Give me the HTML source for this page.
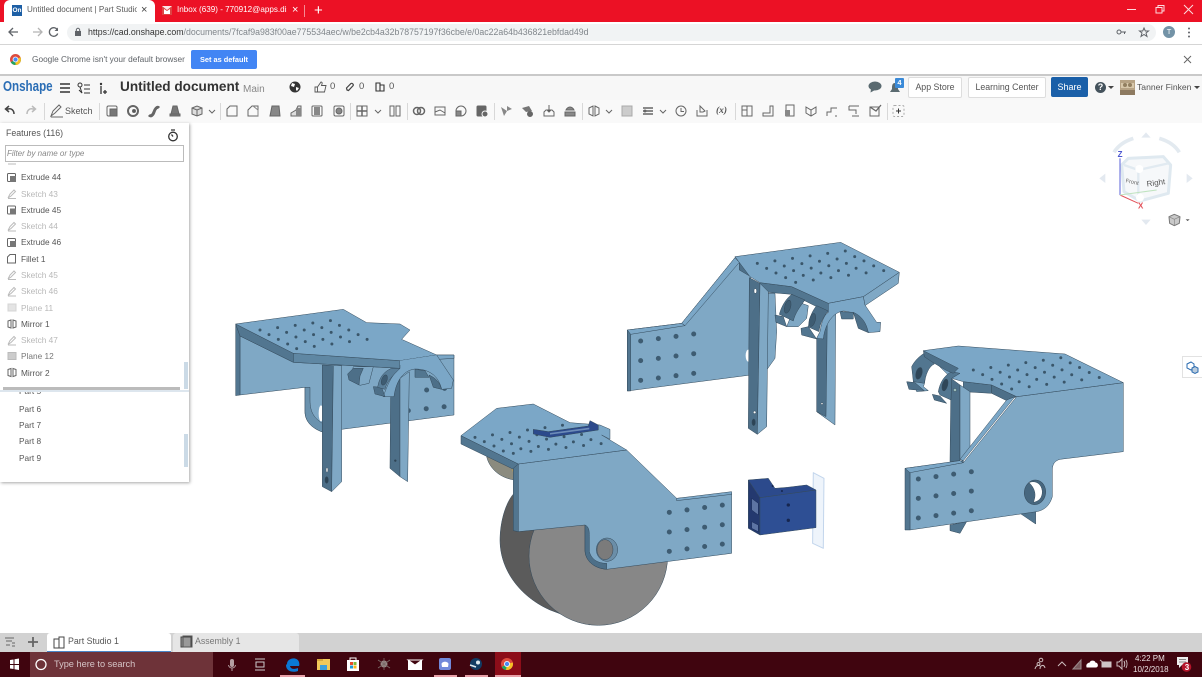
<!DOCTYPE html>
<html><head><meta charset="utf-8"><style>
html,body{margin:0;padding:0;width:1202px;height:677px;overflow:hidden;background:#fff;font-family:"Liberation Sans",sans-serif}
#r{position:absolute;left:0;top:0;width:1202px;height:677px;overflow:hidden;filter:blur(.35px)}
.a,.t{position:absolute}
.t{white-space:nowrap;line-height:12px}
.f{font-size:8.3px;left:21px;color:#555}
.g{color:#b8b8b8}
.p{font-size:8.3px;left:19px;color:#555}
.d{position:absolute;width:1px;height:17px;top:103px;background:#d8d8d8}
.b{position:absolute;background:#fff;border:1px solid #ddd;border-radius:2px;top:77px;height:19px;line-height:19px;text-align:center;font-size:8.8px;color:#555;box-sizing:content-box}
svg{position:absolute;overflow:visible}
</style></head><body><div id="r">

<!-- 3D viewport -->
<svg style="left:0;top:0" width="1202" height="677" viewBox="0 0 1202 677" stroke-linejoin="round">
<!-- Part A -->
<g transform="translate(225 300) scale(.3333)" stroke="#33495a" stroke-width="1.5">
<path d="M45 108L205 187L525 205L635 165L687 165L687 345L350 388L292 396C262 385 240 365 240 335L240 262L45 285Z" fill="#7fa8c5"/>
<path d="M240 262L240 335C240 365 262 385 292 396L292 370C270 355 255 340 255 300L255 262Z" fill="#6a92ae"/>
<ellipse cx="288" cy="340" rx="7" ry="24" fill="#fff" stroke="none"/>
<path d="M32 72L45 108L45 285L32 287Z" fill="#527690"/>
<path d="M32 72L205 160L205 187L45 108Z" fill="#527690"/>
<path d="M205 160L525 182L525 205L205 187Z" fill="#5f87a3"/>
<path d="M32 72L355 28L425 68L525 72L555 90L530 118L635 165L525 182L205 160Z" fill="#7ba7c7"/>
<path d="M635 165L687 165L687 175L640 178Z" fill="#7ba7c7"/>
<g fill="none" stroke="#3a566a" stroke-width="9" stroke-linecap="round" stroke-dasharray="0 53.3"><path d="M105 90L369 55"/><path d="M132 104L396 69"/><path d="M160 118L424 83"/><path d="M188 132L452 97"/><path d="M215 146L479 111"/></g>
<g fill="none" stroke="#3e5c72" stroke-width="15" stroke-linecap="round" stroke-dasharray="0 54"><path d="M605 270L660 265"/><path d="M550 332L660 320"/></g>
<path d="M292 195L325 197L320 575L292 560Z" fill="#4d6f88"/><path d="M325 197L350 197L350 545L320 575Z" fill="#7fa8c5"/>
<ellipse cx="306" cy="510" rx="3" ry="7" fill="#fff"/><ellipse cx="305" cy="540" rx="5" ry="10" fill="#2c4456"/>
<path d="M385 200L445 200L432 250L405 256L375 240Z" fill="#7fa8c5"/>
<path d="M368 222L385 205L415 205L405 228L402 255L372 240Z" fill="#4d6f88"/>
<path d="M497 292L525 235L525 530L495 505Z" fill="#4d6f88"/><path d="M525 235L553 215L548 545L525 530Z" fill="#7fa8c5"/>
<circle cx="511" cy="482" r="3" fill="#2c4456"/>
<path d="M475 290C490 245 505 220 525 205L525 182L635 165L685 240L680 265L650 268C640 225 610 207 570 207C530 212 512 250 507 290Z" fill="#7ba7c7"/>
<path d="M525 182L635 165L630 175L525 195Z" fill="#7ba7c7" stroke="none"/>
<path d="M570 208L600 212L612 232L570 232Z" fill="#527690"/>
<path d="M612 225C635 235 645 250 650 268L625 262Z" fill="#4d6f88"/>
<path d="M445 260L470 262L480 290L450 282Z" fill="#4d6f88"/>
<path d="M458 262C462 235 475 215 500 205L525 205C505 225 485 245 480 268Z" fill="#5a7f9a"/>
<ellipse cx="478" cy="240" rx="8" ry="16" fill="#3e5c72" transform="rotate(20 478 240)"/>
</g>
<!-- Part B -->
<g transform="translate(620 235) scale(.3333)" stroke="#33495a" stroke-width="1.5">
<path d="M22 285L185 265L345 68L392 125L392 420L22 468Z" fill="#7fa8c5"/>
<path d="M22 285L32 298L32 468L22 468Z" fill="#527690"/>
<path d="M22 285L185 265L195 272L32 298Z" fill="#7ba7c7"/>
<path d="M185 265L345 68L358 82L195 272Z" fill="#7ba7c7"/>
<ellipse cx="385" cy="362" rx="8" ry="18" fill="#fff" stroke="none"/>
<g fill="none" stroke="#3e5c72" stroke-width="15" stroke-linecap="round" stroke-dasharray="0 53.5"><path d="M62 318L222 297"/><path d="M62 377L222 356"/><path d="M62 436L222 415"/></g>
<path d="M420 175L465 175L470 290L465 370L440 405L420 400Z" fill="#7fa8c5"/>
<path d="M345 65L358 82L358 105L392 125L415 100Z" fill="#4d6f88"/>
<path d="M420 143L515 155L625 205L625 232L515 178L420 170Z" fill="#527690"/>
<path d="M730 185L838 112L835 145L735 212Z" fill="#7fa8c5"/>
<path d="M345 65L662 22L838 112L730 185L625 205L515 155L420 143L390 125Z" fill="#7ba7c7"/>
<g fill="none" stroke="#3a566a" stroke-width="9" stroke-linecap="round" stroke-dasharray="0 53.3"><path d="M412 85L682 47"/><path d="M440 100L710 64"/><path d="M468 114L738 77"/><path d="M497 128L767 92"/><path d="M527 142L797 106"/></g>
<path d="M388 128L420 145L412 598L385 580Z" fill="#4d6f88"/><path d="M420 145L445 170L440 575L412 598Z" fill="#7fa8c5"/>
<ellipse cx="406" cy="168" rx="4" ry="7" fill="#fff"/><circle cx="404" cy="532" r="4" fill="#fff"/><ellipse cx="401" cy="562" rx="5" ry="10" fill="#2c4456"/>
<path d="M590 310L628 240L618 550L590 530Z" fill="#4d6f88"/><path d="M622 245L647 232L645 570L590 530L618 545Z" fill="#7fa8c5"/><circle cx="606" cy="506" r="3" fill="#fff"/>
<path d="M530 200L565 212L560 250L535 275L500 275Z" fill="#7fa8c5"/>
<path d="M515 178L555 195C540 215 525 235 520 258L478 238C485 212 498 192 515 178Z" fill="#4d6f88"/>
<ellipse cx="503" cy="215" rx="9" ry="20" fill="#3e5c72" transform="rotate(15 503 215)"/>
<path d="M465 240L490 245L500 275L468 262Z" fill="#527690"/>
<path d="M590 310L600 290C605 260 612 240 625 232L625 205L730 185L735 210L770 262L782 262L780 290L745 293C735 255 705 230 670 228C640 232 615 265 610 312Z" fill="#7ba7c7"/>
<path d="M660 230L700 232L700 252L665 252Z" fill="#527690"/>
<path d="M700 232C725 242 740 265 745 293L715 280Z" fill="#4d6f88"/>
<path d="M590 212L625 228C610 245 600 265 597 290L565 276C568 250 575 230 590 212Z" fill="#4d6f88"/>
<ellipse cx="577" cy="255" rx="9" ry="20" fill="#3e5c72" transform="rotate(15 577 255)"/>
<path d="M543 280L565 275L590 312L545 300Z" fill="#527690"/>
</g>
<!-- Part C -->
<g transform="translate(895 340) scale(.3333)" stroke="#33495a" stroke-width="1.5">
<path d="M165 555L215 545L195 580L165 572Z" fill="#527690"/>
<path d="M378 522L422 510L422 552Z" fill="#527690"/>
<path d="M205 125L290 135L290 160L205 155Z" fill="#527690"/>
<path d="M290 135L365 170L335 182L290 160Z" fill="#4d6f88"/>
<path d="M168 115L195 135L195 362L165 365Z" fill="#4d6f88"/>
<path d="M195 135L225 155L225 330L195 360Z" fill="#7fa8c5"/>
<path d="M335 180L360 170L205 362L195 358Z" fill="#7ba7c7"/>
<path d="M365 170L685 128L685 335L495 358C480 362 472 372 472 390L472 470C465 495 450 510 425 515L45 570L45 395L205 368Z" fill="#7fa8c5"/>
<path d="M30 385L205 362L205 368L45 395L45 570L30 570Z" fill="#527690"/>
<path d="M30 385L195 362L205 368L45 398Z" fill="#7ba7c7"/>
<path d="M85 32L190 18L510 42L685 128L365 170L290 135L205 125L170 115Z" fill="#7ba7c7"/>
<g fill="none" stroke="#3a566a" stroke-width="9" stroke-linecap="round" stroke-dasharray="0 53"><path d="M235 90L500 53"/><path d="M263 104L530 68"/><path d="M291 118L558 82"/><path d="M320 132L587 97"/><path d="M350 147L618 112"/></g>
<g fill="none" stroke="#3e5c72" stroke-width="15" stroke-linecap="round" stroke-dasharray="0 53.5"><path d="M70 417L231 395"/><path d="M70 475L231 453"/><path d="M70 534L231 512"/></g>
<ellipse cx="420" cy="457" rx="32" ry="37" fill="#47677f" transform="rotate(8 420 457)"/>
<path d="M402 428C420 420 440 430 442 455C442 475 430 485 415 487C425 465 420 445 402 428Z" fill="#fff"/>
<circle cx="180" cy="150" r="5" fill="#9bb"/>
<path d="M88 92C90 110 92 125 85 140L100 152L65 155L55 125Z" fill="#7fa8c5"/>
<path d="M50 80C60 60 75 48 90 38L118 72C100 80 92 105 88 130L55 125Z" fill="#527690"/>
<ellipse cx="72" cy="100" rx="9" ry="18" fill="#2f4658" transform="rotate(15 72 100)"/>
<path d="M35 125L60 128L88 152L42 148Z" fill="#4d6f88"/>
<path d="M112 163L135 168L155 190L118 180Z" fill="#4d6f88"/>
<path d="M130 155C135 125 150 105 170 95L195 100L170 115L168 180L135 165Z" fill="#527690"/>
<ellipse cx="150" cy="135" rx="8" ry="18" fill="#2f4658" transform="rotate(15 150 135)"/>
<path d="M85 32L190 85L175 100L155 92L110 65L88 50Z" fill="#4d6f88"/>
</g>
<!-- Part D + wheel -->
<g transform="translate(450 400) scale(.3333)" stroke="#33495a" stroke-width="1.5">
<path d="M110 170C118 205 150 235 195 240L205 190Z" fill="#8b8b7f"/>
<path d="M186 205L195 212L192 228Z" fill="#caa040" stroke="none"/>
<path d="M192 280C165 310 150 370 150 420C150 510 210 590 300 630L420 675L420 300Z" fill="#5b5b5b"/>
<circle cx="445" cy="468" r="208" fill="#878787"/>
<path d="M33 107L205 192L205 215L33 132Z" fill="#527690"/>
<path d="M190 205L205 192L205 395L190 392Z" fill="#527690"/>
<path d="M205 192L530 150L680 295L845 280L845 460L470 508C430 505 405 480 405 450L405 375L205 395Z" fill="#7fa8c5"/>
<path d="M405 375C418 380 418 395 418 410L418 455C425 480 445 490 470 490L470 508C430 505 405 480 405 450Z" fill="#4d6f88"/>
<path d="M33 107L140 25L250 12L360 68L450 75L480 88L480 118L455 105L530 150L205 192Z" fill="#7ba7c7"/>
<path d="M680 295L845 275L845 283L680 302Z" fill="#7ba7c7"/>
<g fill="none" stroke="#3a566a" stroke-width="9" stroke-linecap="round" stroke-dasharray="0 53"><path d="M75 112L342 75"/><path d="M103 125L370 90"/><path d="M132 138L399 103"/><path d="M160 153L430 118"/><path d="M190 160L460 130"/></g>
<g fill="none" stroke="#3e5c72" stroke-width="15" stroke-linecap="round" stroke-dasharray="0 53.5"><path d="M658 337L820 315"/><path d="M658 396L820 374"/><path d="M658 454L820 432"/></g>
<ellipse cx="471" cy="449" rx="32" ry="35" fill="#6b8ea8"/><ellipse cx="465" cy="449" rx="24" ry="30" fill="#7b7b7b"/>
<path d="M250 88L295 95L415 78L420 62L445 75L445 90L300 112L250 102Z" fill="#2c4a8c"/>
<path d="M300 99L418 83L418 88L300 104Z" fill="#6d8cb8" stroke="none"/>
<!-- blue block -->
<path d="M1090 218L1122 235L1120 445L1088 430Z" fill="#eef4fb" stroke="#c2d5ec" stroke-width="3"/>
<path d="M895 240L930 293L930 405L895 385Z" fill="#24396f"/>
<path d="M905 295L925 310L925 345L905 330ZM905 365L925 375L925 395L905 385Z" fill="#5d74a3" stroke="#182a55"/>
<path d="M930 293L1098 270L1098 383L930 405Z" fill="#2e4f94"/>
<path d="M895 240L955 235L975 265L1012 262L1070 255L1098 270L930 293Z" fill="#2c4a8c"/>
<circle cx="1015" cy="315" r="5" fill="#16264f" stroke="none"/><circle cx="1015" cy="361" r="5" fill="#16264f" stroke="none"/>
<circle cx="968" cy="258" r="3" fill="#16264f" stroke="none"/><circle cx="996" cy="273" r="3" fill="#16264f" stroke="none"/>
</g>
<!-- nav cube -->
<g transform="translate(1000 125) scale(.3333)">
<path d="M342 82C355 60 375 48 400 40M478 40C505 48 525 60 538 82" fill="none" stroke="#e3eaf0" stroke-width="11"/>
<path d="M438 22L452 38L424 38ZM298 160L316 146L316 174ZM578 160L560 146L560 174ZM438 300L424 284L452 284Z" fill="#e3e9f0"/>
<path d="M385 100L490 95L512 120L505 205L420 228L372 200L365 120Z" fill="#f6f8fa" stroke="#dfe9f0" stroke-width="9"/>
<path d="M372 120L415 135L415 215M415 135L505 115" fill="none" stroke="#e1eaf1" stroke-width="7"/>
<circle cx="418" cy="132" r="12" fill="#fff"/><circle cx="420" cy="218" r="12" fill="#fff"/>
<path d="M360 100V210" stroke="#5b63d8" stroke-width="3" fill="none"/>
<path d="M360 210L415 235" stroke="#e2525a" stroke-width="3" fill="none"/>
<path d="M360 210L470 195" stroke="#bfe3bf" stroke-width="3" fill="none"/>
<text x="353" y="96" font-family="Liberation Sans" font-size="24" font-weight="bold" fill="#4a55d0">Z</text>
<text x="414" y="250" font-family="Liberation Sans" font-size="24" font-weight="bold" fill="#e2525a">X</text>
<text x="441" y="185" font-family="Liberation Sans" font-size="24" fill="#555" transform="rotate(-8 441 185)">Right</text>
<text x="376" y="172" font-family="Liberation Sans" font-size="17" fill="#666" transform="rotate(12 376 172)">Front</text>
<path d="M507 275L523 268L540 275L538 295L523 302L509 295Z" fill="#c9c9c9" stroke="#777" stroke-width="3"/>
<path d="M507 275L523 283L540 275M523 283V302" fill="none" stroke="#888" stroke-width="2"/>
<path d="M557 283H569L563 288Z" fill="#444"/>
</g>
</svg>

<!-- side button -->
<div class="a" style="left:1182px;top:356px;width:20px;height:22px;background:#fff;border:1px solid #e2e2e2;border-right:0;box-sizing:border-box"></div>
<svg style="left:1186px;top:361px" width="13" height="13" viewBox="0 0 13 13" fill="none" stroke="#2a6bb0" stroke-width="1"><path d="M1 3L5 1L8 3V7L5 9L1 7Z"/><path d="M6 7L9 5.5L12 7V11L9 12.5L6 11Z" fill="#bcd"/></svg>

<!-- chrome titlebar -->
<div class="a" style="left:0;top:0;width:1202px;height:22px;background:#ec1125"></div>
<div class="a" style="left:4px;top:0;width:151px;height:22px;background:#fff;border-radius:6px 6px 0 0"></div>
<div class="a" style="left:12px;top:5px;width:10px;height:11px;background:#1d5fa5;color:#fff;font-size:6.5px;font-weight:bold;line-height:11px;text-align:center">On</div>
<div class="t" style="left:27px;top:4px;font-size:8.1px;color:#5a5a5a;width:110px;overflow:hidden">Untitled document | Part Studio 1</div>
<div class="t" style="left:141px;top:4px;font-size:11px;color:#444">×</div>
<svg style="left:162px;top:6px" width="10" height="9" viewBox="0 0 10 9"><rect width="10" height="9" fill="#fff" opacity=".9"/><path d="M0 0L5 4L10 0V9H0Z" fill="#d44"/><path d="M2 8V3L5 5L8 3V8Z" fill="#fff"/></svg>
<div class="t" style="left:177px;top:4px;font-size:8.1px;color:#fff;width:110px;overflow:hidden">Inbox (639) - 770912@apps.distr</div>
<div class="t" style="left:292px;top:4px;font-size:11px;color:#fff">×</div>
<div class="a" style="left:304px;top:5px;width:1px;height:12px;background:#f58a93"></div>
<div class="t" style="left:314px;top:5px;font-size:15px;color:#fff">+</div>
<svg style="left:1125px;top:3px" width="72" height="13" viewBox="0 0 72 13" fill="none" stroke="#fff" stroke-width="1" opacity=".85"><path d="M2 6.5H11"/><path d="M31 4.5H37V10H31ZM33 4.5V2.5H39V8H37"/><path d="M59 2L68 11M68 2L59 11"/></svg>

<!-- address bar -->
<div class="a" style="left:0;top:22px;width:1202px;height:22px;background:#fff;border-bottom:1px solid #d5d5d5"></div>
<div class="a" style="left:67px;top:24px;width:1089px;height:17px;background:#f1f3f4;border-radius:9px"></div>
<svg style="left:6px;top:25px" width="54" height="14" viewBox="0 0 54 14" fill="none" stroke="#5f6368" stroke-width="1.3"><path d="M12 7H3M7 3L3 7L7 11"/><path d="M27 7H36M32 3L36 7L32 11" stroke="#b4b4b4"/><path d="M51.5 5A4.3 4.3 0 1 0 51.7 8.5"/><path d="M52 2.5V6H48.5Z" fill="#5f6368" stroke="none"/></svg>
<svg style="left:74px;top:27px" width="8" height="10" viewBox="0 0 8 10"><rect x="1" y="4" width="6" height="5" fill="#5f6368"/><path d="M2.3 4V3A1.7 1.7 0 0 1 5.7 3V4" fill="none" stroke="#5f6368"/></svg>
<div class="t" style="left:88px;top:26px;font-size:8.77px;color:#80868b"><span style="color:#333">https://cad.onshape.com</span>/documents/7fcaf9a983f00ae775534aec/w/be2cb4a32b78757197f36cbe/e/0ac22a64b436821ebfdad49d</div>
<svg style="left:1116px;top:27px" width="34" height="11" viewBox="0 0 34 11" fill="none" stroke="#5f6368"><circle cx="3" cy="5" r="2"/><path d="M5 5H10M8.5 5V7"/><path d="M28 1L29.3 4H32.5L30 6L31 9.5L28 7.5L25 9.5L26 6L23.5 4H26.7Z"/></svg>
<div class="a" style="left:1163px;top:26px;width:12px;height:12px;border-radius:50%;background:#7393a7;color:#fff;font-size:7.5px;line-height:12px;text-align:center">T</div>
<svg style="left:1187px;top:27px" width="4" height="11" viewBox="0 0 4 11" fill="#5f6368"><circle cx="2" cy="1.5" r="1"/><circle cx="2" cy="5.5" r="1"/><circle cx="2" cy="9.5" r="1"/></svg>

<!-- infobar -->
<div class="a" style="left:0;top:45px;width:1202px;height:29px;background:#fff;border-bottom:2px solid #c9c9c9"></div>
<svg style="left:10px;top:54px" width="11" height="11" viewBox="0 0 22 22"><circle cx="11" cy="11" r="11" fill="#dd4b3e"/><path d="M11 11L1.5 16.5A11 11 0 0 0 11 22A11 11 0 0 0 21.5 8Z" fill="#1da462"/><path d="M11 11L21 6.5A11 11 0 0 1 11 22Z" fill="#f6c026"/><circle cx="11" cy="11" r="5" fill="#4a8af4" stroke="#fff" stroke-width="1.5"/></svg>
<div class="t" style="left:32px;top:53px;font-size:8.3px;color:#5f6368">Google Chrome isn't your default browser</div>
<div class="a" style="left:191px;top:50px;width:66px;height:19px;background:#4285f4;border-radius:2px;color:#fff;font-size:7.4px;font-weight:bold;line-height:19px;text-align:center">Set as default</div>
<svg style="left:1184px;top:56px" width="7" height="7" viewBox="0 0 7 7" stroke="#666" stroke-width="1"><path d="M0 0L7 7M7 0L0 7"/></svg>

<!-- onshape header -->
<div class="a" style="left:0;top:76px;width:1202px;height:24px;background:#f7f7f7"></div>
<div class="a" style="left:0;top:100px;width:1202px;height:23px;background:#f9f9f9"></div>
<div class="t" style="left:3px;top:81px;font-size:14.5px;font-weight:bold;color:#2a6db5;transform:scaleX(.8);transform-origin:0 0">Onshape</div>
<svg style="left:59px;top:82px" width="50" height="13" viewBox="0 0 50 13" fill="none" stroke="#333" stroke-width="1.4"><path d="M1 2H11M1 6H11M1 10H11" stroke-width="1.6"/><circle cx="21" cy="3" r="2" stroke-width="1"/><path d="M21 5L23 11L20 8" stroke-width="1"/><path d="M25 3H31M25 7H31M25 11H31" stroke-width="1"/><circle cx="42" cy="2" r="1.2" fill="#333" stroke="none"/><path d="M42 4V12M46 8V12M44 10H48" stroke-width="1.3"/></svg>
<div class="t" style="left:120px;top:81px;font-size:13.6px;font-weight:bold;color:#333">Untitled document</div>
<div class="t" style="left:243px;top:84px;font-size:10px;color:#888">Main</div>
<svg style="left:289px;top:81px" width="12" height="12" viewBox="0 0 12 12"><circle cx="6" cy="6" r="5.5" fill="#333"/><path d="M3 2L6 3L5 6L2 5ZM7 6L10 7L8 10L7 9Z" fill="#fff"/></svg>
<svg style="left:314px;top:81px" width="13" height="12" viewBox="0 0 13 12" fill="none" stroke="#555" stroke-width=".9"><path d="M1 6H3.5V11H1ZM3.5 6L7 1C8 1 8.5 2 8 3L7.5 4.5H12L10.5 11H3.5"/></svg>
<div class="t" style="left:330px;top:81px;font-size:9.5px;color:#555">0</div>
<svg style="left:345px;top:82px" width="10" height="10" viewBox="0 0 10 10" fill="none" stroke="#444" stroke-width="1.2"><path d="M2 8L1.5 6L6 1.5C7 .8 8.8 2.5 8.2 3.5L3.5 8.5Z"/></svg>
<div class="t" style="left:359px;top:81px;font-size:9.5px;color:#555">0</div>
<svg style="left:375px;top:82px" width="10" height="10" viewBox="0 0 10 10" fill="none" stroke="#333" stroke-width="1.1"><path d="M1 1H5V9H1ZM5 3H9V9H5Z"/></svg>
<div class="t" style="left:389px;top:81px;font-size:9.5px;color:#555">0</div>
<svg style="left:868px;top:81px" width="14" height="12" viewBox="0 0 14 12"><ellipse cx="7" cy="5" rx="6.5" ry="4.5" fill="#5a6a70"/><path d="M3 8L2.5 11.5L7 9Z" fill="#5a6a70"/></svg>
<svg style="left:889px;top:82px" width="12" height="12" viewBox="0 0 12 12"><path d="M6 1C9 1 9 4 9 7L11 10H1L3 7C3 4 3 1 6 1Z" fill="#5a6a70"/></svg>
<div class="a" style="left:895px;top:78px;width:9px;height:10px;background:#3a8ad8;color:#fff;font-size:7.5px;font-weight:bold;line-height:10px;text-align:center;border-radius:1px">4</div>
<div class="b" style="left:908px;width:52px">App Store</div>
<div class="b" style="left:968px;width:76px">Learning Center</div>
<div class="a" style="left:1051px;top:77px;width:37px;height:20px;background:#1a5fa8;border-radius:2px;color:#fff;font-size:9px;line-height:20px;text-align:center">Share</div>
<div class="a" style="left:1095px;top:82px;width:11px;height:11px;border-radius:50%;background:#44525c;color:#fff;font-size:9px;font-weight:bold;line-height:11px;text-align:center">?</div>
<svg style="left:1108px;top:86px" width="6" height="4"><path d="M0 0H6L3 3Z" fill="#444"/></svg>
<svg style="left:1120px;top:80px" width="15" height="15" viewBox="0 0 15 15"><rect width="15" height="15" fill="#b6a284"/><rect x="1" y="3" width="13" height="5" fill="#d7c7aa"/><circle cx="5" cy="5" r="2" fill="#927f60"/><circle cx="10" cy="5" r="2" fill="#927f60"/><rect y="10" width="15" height="5" fill="#8d7a60"/></svg>
<div class="t" style="left:1137px;top:81px;font-size:8.6px;color:#555">Tanner Finken</div>
<svg style="left:1194px;top:86px" width="6" height="4"><path d="M0 0H6L3 3Z" fill="#444"/></svg>

<!-- toolbar -->
<div class="d" style="left:44px"></div><div class="d" style="left:99px"></div><div class="d" style="left:220px"></div><div class="d" style="left:350px"></div><div class="d" style="left:407px"></div><div class="d" style="left:494px"></div><div class="d" style="left:582px"></div><div class="d" style="left:735px"></div><div class="d" style="left:887px"></div>
<div class="t" style="left:65px;top:105px;font-size:9px;color:#555">Sketch</div>
<div class="t" style="left:716px;top:105px;font-size:9.5px;font-weight:bold;font-style:italic;color:#555;font-family:'Liberation Serif',serif">(x)</div>
<svg style="left:0;top:100px" width="910" height="23" viewBox="0 100 910 23" fill="none" stroke="#666" stroke-width="1">
<path d="M14 114C14 110 11 108 8 109L6 109M9 106L5.500 109L9 112" stroke="#444" stroke-width="1.5"/>
<path d="M27 114C27 110 30 108 33 109L35 109M32 106L35.500 109L32 112" stroke="#bbb" stroke-width="1.500"/>
<path d="M51 116L53 111L59 105L61 107L55 113ZM51 117H63" stroke-width="1"/>
<rect x="107" y="106" width="10" height="10" rx="1.500"/><rect x="110" y="109" width="7" height="7" fill="#777"/>
<circle cx="133" cy="111" r="5" stroke-width="2"/><circle cx="134" cy="111" r="1.500" fill="#555"/>
<path d="M149 115C151 117 153 115 154 112C155 109 157 106 159 108" stroke-width="3" stroke="#666"/>
<path d="M173 106H177L179 114H171Z" fill="#777"/><rect x="170" y="114" width="10" height="2" fill="#777"/>
<path d="M192 108L197 106L202 108V114L197 116L192 114Z" fill="#ddd"/><path d="M192 108L197 110L202 108M197 110V116"/>
<path d="M209 110L212 113L215 110" stroke-width="1"/>
<path d="M227 116V109L230 106H237V116Z"/>
<path d="M248 116V110L252 106H258V116Z" stroke-width="1"/><path d="M253 106L258 110V116" stroke="#888"/>
<path d="M270 116L272 106H279L280 116Z" fill="#888"/>
<path d="M291 116V113L296 110L298 106H301V116Z" fill="#ddd"/><rect x="296" y="108" width="5" height="8" fill="#888" stroke="none"/>
<rect x="312" y="106" width="10" height="10" rx="1"/><rect x="314" y="107" width="6" height="8" fill="#888" stroke="none"/>
<rect x="334" y="106" width="10" height="10" rx="1.500"/><circle cx="339" cy="111" r="3" fill="#888"/>
<rect x="357" y="106" width="10" height="10"/><path d="M362 106V116M357 111H367" stroke-width="1.500"/>
<path d="M375 110L378 113L381 110"/>
<path d="M390 106H394V116H390ZM396 106H400V116H396Z"/>
<circle cx="417" cy="111" r="3.500" stroke-width="1.500"/><circle cx="421" cy="111" r="3.500" stroke-width="1.500"/>
<path d="M435 107H445V115H435ZM435 112L440 110L445 113"/>
<circle cx="461" cy="111" r="5"/><path d="M456 111H461V116H456Z" fill="#888"/>
<rect x="477" y="106" width="9" height="10" rx="1" fill="#666"/><circle cx="485" cy="114" r="3" fill="#666" stroke="#f9f9f9"/>
<path d="M501 107L507 111L504 116ZM507 106L512 109L507 111Z" fill="#888" stroke="none"/>
<path d="M522 108L529 106L532 111L526 112Z" fill="#777" stroke="none"/><circle cx="530" cy="114" r="2.500" fill="#666"/>
<path d="M544 112V116H554V112L552 110H546ZM549 105V110" stroke-width="1"/><path d="M547 110L549 112L551 110" fill="#555"/>
<path d="M565 112V116H575V112ZM566 110C568 106 572 106 574 110Z" fill="#888"/>
<path d="M589 108L593 106V116L589 114ZM595 106L599 108V114L595 116Z"/>
<path d="M606 110L609 113L612 110"/>
<rect x="622" y="106" width="10" height="10" fill="#ccc" stroke="#aaa"/>
<path d="M643 108H653M643 111H653M643 114H653" stroke-width="1.500"/><circle cx="645" cy="111" r="1"/>
<path d="M660 110L663 113L666 110"/>
<circle cx="681" cy="111" r="5"/><path d="M681 108V111.500H684"/>
<path d="M697 110V116H707V110M700 106L705 111L703 112H700Z"/>
<path d="M742 106H752V116H742ZM747 106V116M742 110H747"/>
<path d="M763 116V113H770V106H773V116Z"/>
<rect x="786" y="105" width="8" height="11"/><rect x="785" y="110" width="5" height="6" fill="#888" stroke="none"/>
<path d="M806 107L811 110L816 107V113L811 116L806 113ZM811 110V116"/>
<path d="M827 116V112H831V108H837M835 116H837"/>
<path d="M849 106H859M849 106V110H856V114M852 116H859"/>
<rect x="870" y="107" width="9" height="9"/><path d="M870 107L876 111L881 105" stroke-width="1.300"/>
<rect x="893" y="105.500" width="11" height="11" rx="1.500" stroke="#aaa" stroke-dasharray="2 2"/><path d="M896 111H901M898.500 108.500V113.500" stroke="#333"/>
</svg>

<!-- left panel -->
<div class="a" style="left:0;top:123px;width:189px;height:359px;background:#fff;box-shadow:1px 1px 3px rgba(0,0,0,.35)"></div>
<div class="t" style="left:6px;top:127px;font-size:8.8px;color:#555">Features (116)</div>
<svg style="left:167px;top:129px" width="12" height="13" viewBox="0 0 12 13" fill="none" stroke="#333" stroke-width="1.300"><circle cx="6" cy="7.500" r="4.300"/><path d="M4 1H8M6 7.500L4.500 5.500"/></svg>
<div class="a" style="left:5px;top:145px;width:179px;height:17px;border:1px solid #bbb;box-sizing:border-box"></div>
<div class="t" style="left:7px;top:148px;font-size:8px;font-style:italic;color:#888">Filter by name or type</div>
<div class="a" style="left:8px;top:163px;width:8px;height:2px;background:#ddd"></div>

<div class="t f" style="top:171px">Extrude 44</div>
<div class="t f g" style="top:188px">Sketch 43</div>
<div class="t f" style="top:204px">Extrude 45</div>
<div class="t f g" style="top:220px">Sketch 44</div>
<div class="t f" style="top:236px">Extrude 46</div>
<div class="t f" style="top:253px">Fillet 1</div>
<div class="t f g" style="top:269px">Sketch 45</div>
<div class="t f g" style="top:285px">Sketch 46</div>
<div class="t f g" style="top:302px">Plane 11</div>
<div class="t f" style="top:318px">Mirror 1</div>
<div class="t f g" style="top:334px">Sketch 47</div>
<div class="t f" style="top:350px;color:#777">Plane 12</div>
<div class="t f" style="top:367px">Mirror 2</div>
<svg style="left:0;top:170px" width="20" height="212" viewBox="0 170 20 212" fill="none" stroke="#666" stroke-width="1">
<rect x="7.500" y="173.500" width="8" height="8" rx="1"/><rect x="10" y="176" width="6" height="6" fill="#777" stroke="none"/>
<rect x="7.500" y="206" width="8" height="8" rx="1"/><rect x="10" y="208.500" width="6" height="6" fill="#777" stroke="none"/>
<rect x="7.500" y="238.500" width="8" height="8" rx="1"/><rect x="10" y="241" width="6" height="6" fill="#777" stroke="none"/>
<g stroke="#bbb"><path d="M8 198L10 194L14 190L15.500 191.500L11 196L8 198M8 198.500H16"/><path d="M8 230.500L10 226.500L14 222.500L15.500 224L11 228.500L8 230.500M8 231H16"/><path d="M8 279L10 275L14 271L15.500 272.500L11 277L8 279M8 279.500H16"/><path d="M8 295.500L10 291.500L14 287.500L15.500 289L11 293.500L8 295.500M8 296H16"/><path d="M8 344.500L10 340.500L14 336.500L15.500 338L11 342.500L8 344.500M8 345H16"/></g>
<path d="M7.500 263V257L10 254.500H15.500V263Z"/>
<rect x="8" y="304" width="8" height="7" fill="#e4e4e4" stroke="#d5d5d5"/>
<rect x="8" y="352.500" width="8" height="7" fill="#ccc" stroke="#bbb"/>
<path d="M8 321L11 320V328L8 327ZM13 320L16 321V327L13 328Z"/>
<path d="M8 369.500L11 368.500V376.500L8 375.500ZM13 368.500L16 369.500V375.500L13 376.500Z"/>
</svg>
<div class="a" style="left:184px;top:362px;width:4px;height:27px;background:#cbdae6"></div>
<div class="a" style="left:3px;top:387px;width:177px;height:3px;background:#bbb"></div>
<div class="a" style="left:0;top:390px;width:189px;height:2px;background:#dde6ee"></div>
<div class="a" style="left:0;top:392px;width:189px;height:5px;overflow:hidden"><div class="t p" style="top:-7px">Part 5</div></div>
<div class="t p" style="top:403px">Part 6</div>
<div class="t p" style="top:419px">Part 7</div>
<div class="t p" style="top:435px">Part 8</div>
<div class="t p" style="top:452px">Part 9</div>
<div class="a" style="left:184px;top:434px;width:4px;height:33px;background:#cbdae6"></div>

<!-- bottom tabs -->
<div class="a" style="left:0;top:633px;width:1202px;height:19px;background:#d2d2d2"></div>
<svg style="left:4px;top:636px" width="34" height="12" viewBox="0 0 34 12" fill="none" stroke="#666" stroke-width="1"><path d="M1 2H10M2 5H8M2 9H6M8 7H11M8 10H11"/><path d="M24 6H34M29 1V11" stroke-width="1.800"/></svg>
<div class="a" style="left:47px;top:633px;width:124px;height:18px;background:#fff;border-bottom:1px solid #4a86c8;border-radius:3px 3px 0 0"></div>
<div class="a" style="left:173px;top:633px;width:126px;height:19px;background:#e6e6e6;border-radius:3px 3px 0 0"></div>
<svg style="left:53px;top:635px" width="140" height="14" viewBox="0 0 140 14" fill="none" stroke="#444"><path d="M1 4H6V13H1ZM6 2H11V13H6Z"/><rect x="128" y="2" width="10" height="10" fill="#999"/><rect x="130" y="1" width="9" height="11" stroke="#555"/></svg>
<div class="t" style="left:68px;top:635px;font-size:8.8px;color:#555">Part Studio 1</div>
<div class="t" style="left:195px;top:635px;font-size:8.8px;color:#777">Assembly 1</div>

<!-- taskbar -->
<div class="a" style="left:0;top:652px;width:1202px;height:25px;background:#40050f"></div>
<div class="a" style="left:30px;top:652px;width:183px;height:25px;background:#6e3339"></div>
<div class="a" style="left:495px;top:652px;width:26px;height:25px;background:#8c0d19"></div>
<div class="a" style="left:280px;top:675px;width:25px;height:2px;background:#e8a0a8"></div>
<div class="a" style="left:434px;top:675px;width:23px;height:2px;background:#e8a0a8"></div>
<div class="a" style="left:465px;top:675px;width:23px;height:2px;background:#e8a0a8"></div>
<div class="a" style="left:495px;top:675px;width:26px;height:2px;background:#e8a0a8"></div>
<svg style="left:0;top:652px" width="530" height="25" viewBox="0 652 530 25">
<path d="M10 660L13.500 659.500V664H10ZM14.500 659.300L19 658.500V664H14.500ZM10 665H13.500V669L10 668.500ZM14.500 665H19V670L14.500 669.300Z" fill="#fff"/>
<circle cx="41" cy="664.500" r="5" fill="none" stroke="#fff" stroke-width="1.300"/>
<rect x="230" y="659" width="4" height="8" rx="2" fill="#b5a0a3"/><path d="M228.500 665C229 669 235 669 235.500 665M232 668V671" fill="none" stroke="#b5a0a3"/>
<path d="M255 659H265M255 670H265M256 662H264V667H256Z" fill="none" stroke="#ccc" stroke-width="1"/>
<path d="M287 664C287 658 297 656 299 662C299.500 664 299.500 665 299 666H290C291 670 295 669 298 668V671C292 673 286 671 286 665Z" fill="#0a78d4"/>
<rect x="317" y="659" width="13" height="11" fill="#f3c95a"/><rect x="317" y="659" width="6" height="2" fill="#d9a93d"/><rect x="320" y="665" width="7" height="5" fill="#3fa0dc"/>
<rect x="347" y="660" width="12" height="11" fill="#fff"/><path d="M350 660V658H356V660" fill="none" stroke="#fff"/><rect x="350" y="662" width="3" height="3" fill="#e74c2b"/><rect x="353.500" y="662" width="3" height="3" fill="#7dbb3a"/><rect x="350" y="665.500" width="3" height="3" fill="#1c9ad6"/><rect x="353.500" y="665.500" width="3" height="3" fill="#f8b71c"/>
<circle cx="384" cy="664" r="3.500" fill="#9a8a88"/><path d="M378 660L390 668M378 668L390 660M384 658V670" stroke="#7a6a68" stroke-width=".8"/>
<rect x="408" y="660" width="14" height="10" fill="#fff"/><path d="M408 660L415 665L422 660Z" fill="#40050f" stroke="#fff"/>
<rect x="439" y="658" width="12" height="12" rx="2" fill="#7289da"/><path d="M441.500 664C442 661 448 661 448.500 664L448 667H442Z" fill="#fff"/>
<circle cx="476" cy="664" r="6" fill="#123b63"/><circle cx="478" cy="662.500" r="2" fill="#dfe8ef"/><path d="M470 665L476 667" stroke="#dfe8ef" stroke-width="1.500"/>
<circle cx="507" cy="664" r="6" fill="#dd4b3e"/><path d="M507 670A6 6 0 0 1 501.800 667L507 664L512.800 662.500A6 6 0 0 1 507 670Z" fill="#f6c026"/><path d="M501.800 667A6 6 0 0 0 506 670L507 664Z" fill="#1da462"/><circle cx="507" cy="664" r="2.600" fill="#4a8af4" stroke="#fff" stroke-width=".8"/>
</svg>
<div class="t" style="left:54px;top:658px;font-size:9.2px;color:#d6c5c7">Type here to search</div>
<svg style="left:1030px;top:654px" width="100" height="20" viewBox="1030 654 100 20" fill="none" stroke="#cbbcbd" stroke-width="1">
<circle cx="1041" cy="660" r="1.800"/><path d="M1035 669C1036 665 1039 665 1040 666M1037 664a1.500 1.500 0 1 0 0-.1M1040 669C1040 665 1044 664 1045 668"/>
<path d="M1058 666L1062 662L1066 666"/>
<path d="M1073 669L1081 660V669Z" fill="#7a5a5e" stroke="#9a8a8c"/>
<path d="M1087 667C1086 664 1089 663 1090 663C1091 660 1095 661 1095 663C1098 663 1098 667 1096 667Z" fill="#fff" stroke="#fff"/>
<rect x="1102" y="662" width="9" height="5" fill="#cfc5c6" stroke="#cfc5c6"/><path d="M1100 660L1104 663"/>
<path d="M1117 662H1119L1122 659V669L1119 666H1117ZM1124 661C1125 663 1125 665 1124 667M1126 660C1127.500 663 1127.500 665 1126 668"/>
</svg>
<div class="t" style="left:1135px;top:653px;width:28px;text-align:center;font-size:8px;color:#e8dfe0">4:22 PM</div>
<div class="t" style="left:1133px;top:664px;width:32px;text-align:center;font-size:8px;color:#e8dfe0">10/2/2018</div>
<svg style="left:1176px;top:657px" width="16" height="16" viewBox="0 0 16 16"><path d="M1 0H12V8H6L3 11V8H1Z" fill="#eee"/><path d="M3 2.500H10M3 5H10" stroke="#888"/><circle cx="10.500" cy="10" r="4.800" fill="#b5152a"/><text x="8.700" y="13" font-family="Liberation Sans" font-size="8" font-weight="bold" fill="#fff">3</text></svg>
</div></body></html>
